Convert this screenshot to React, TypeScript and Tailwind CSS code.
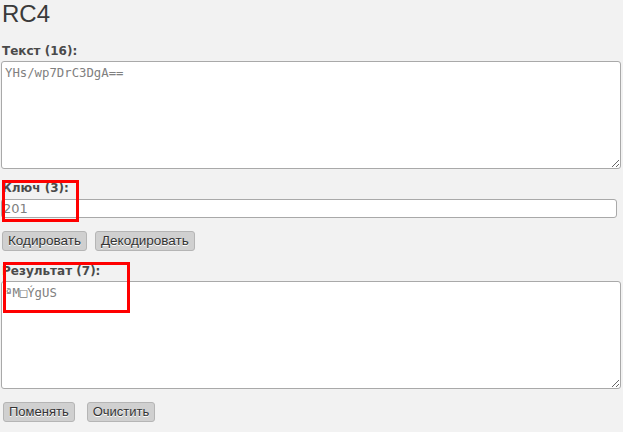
export default function App() {
  const labelCls =
    "block text-[12px] leading-[16px] font-bold text-[#4a4a4a] font-['DejaVu_Sans','Verdana',sans-serif]";
  const areaCls =
    "block w-[620px] h-[108px] resize-y rounded-[3px] border border-[#a9a9a9] bg-white px-[3px] py-[3px] text-[12.3px] leading-[16px] text-[#808080] font-['DejaVu_Sans_Mono',monospace] outline-none";
  const btnCls =
    "h-[20px] rounded-[3px] border border-[#b5b5b5] bg-[#d0d0d0] px-[5px] leading-[18px] text-[#333] font-['Liberation_Sans',Arial,sans-serif] [text-shadow:0_1px_0_#fff]";

  return (
    <div className="relative min-h-[432px] w-[623px] bg-[#f2f2f2] font-['Liberation_Sans',Arial,sans-serif]">
      <h1 className="pl-[2px] pt-[1px] text-[24px] leading-[26px] text-[#3a3a3a]">RC4</h1>

      <div className="pl-[1px] pt-[16px]">
        <label className={labelCls + " pl-[1px]"}>Текст (16):</label>
        <textarea
          className={areaCls + " mt-[2px]"}
          defaultValue="YHs/wp7DrC3DgA=="
          readOnly
        />

        <label className={labelCls + " pl-[1px] mt-[11px]"}>Ключ (3):</label>
        <input
          className="mt-[3px] block h-[19px] w-[616px] rounded-[3px] border border-[#a9a9a9] bg-white px-[1px] text-[13px] text-[#808080] font-['DejaVu_Sans','Verdana',sans-serif] outline-none"
          defaultValue="201"
          readOnly
        />

        <div className="mt-[13px] flex gap-[8px] pl-[1px]">
          <button className={btnCls + " text-[13.5px]"}>Кодировать</button>
          <button className={btnCls + " text-[13.5px]"}>Декодировать</button>
        </div>

        <label className={labelCls + " pl-[1px] mt-[12px]"}>Результат (7):</label>
        <textarea
          className={areaCls + " mt-[2px]"}
          defaultValue={"\u00AAM\u25A1\u00DDgUS"}
          readOnly
        />

        <div className="mt-[13px] flex gap-[12px] pl-[2px]">
          <button className={btnCls + " text-[13px]"}>Поменять</button>
          <button className={btnCls + " text-[13px]"}>Очистить</button>
        </div>
      </div>

      <div className="pointer-events-none absolute left-[2px] top-[180px] h-[42px] w-[77px] border-[3px] border-[#ff0000]" />
      <div className="pointer-events-none absolute left-[3px] top-[262px] h-[51px] w-[127px] border-[3px] border-[#ff0000]" />
    </div>
  );
}
